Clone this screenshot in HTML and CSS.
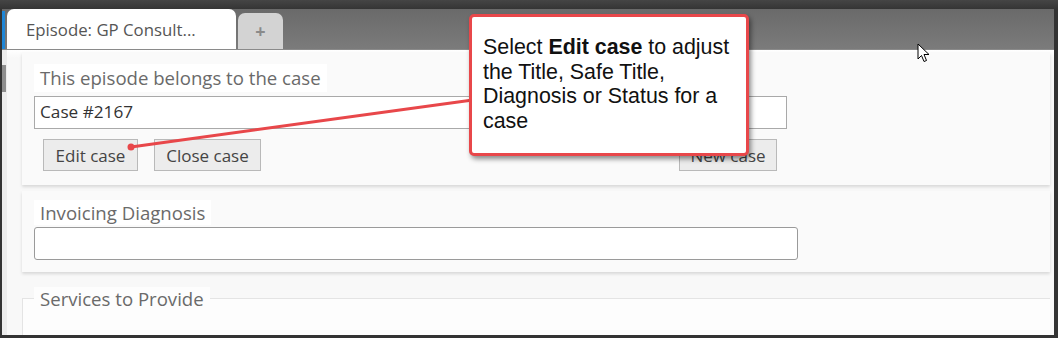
FILE: index.html
```html
<!DOCTYPE html>
<html>
<head>
<meta charset="utf-8">
<link rel="stylesheet" href="styles.css">
</head>
<body>
<div class="frame">
  <div class="tabbar">
    <div class="active-mark"></div>
    <div class="tab active">Episode: GP Consult...</div>
    <div class="tab add">+</div>
  </div>
  <div class="content">
    <div class="gutter"><div class="thumb"></div></div>
    <div class="main">
      <section class="panel first">
        <div class="legend">This episode belongs to the case</div>
        <div class="input">Case #2167</div>
        <div class="btn-row">
          <button class="btn edit">Edit case</button>
          <button class="btn close">Close case</button>
          <button class="btn new">New case</button>
        </div>
      </section>
      <section class="panel second">
        <div class="legend">Invoicing Diagnosis</div>
        <div class="input rounded"></div>
      </section>
      <section class="fieldset">
        <div class="legend plain">Services to Provide</div>
      </section>
    </div>
  </div>

  <svg class="pointer-line" width="1058" height="338" viewBox="0 0 1058 338">
    <line x1="131" y1="147" x2="480" y2="99" stroke="#e8474a" stroke-width="3" stroke-linecap="round"/>
    <circle cx="131" cy="147" r="3.5" fill="#e8474a"/>
  </svg>

  <div class="callout">Select <b>Edit case</b> to adjust<br>the Title, Safe Title,<br>Diagnosis or Status for a<br>case</div>

  <svg class="cursor" width="14" height="21" viewBox="0 0 14 21">
    <path d="M1 1 L1 16 L4.5 12.5 L7 18.5 L9.5 17.5 L7 11.5 L12 11.5 Z" fill="#fff" stroke="#000" stroke-width="1" stroke-linejoin="round"/>
  </svg>
</div>
</body>
</html>
```
FILE: styles.css
```css
* { box-sizing: border-box; }
html, body { margin: 0; padding: 0; }
body { width: 1058px; height: 338px; overflow: hidden; background: #3a3a3a; }

.frame {
  position: relative;
  width: 1058px;
  height: 338px;
  background: linear-gradient(#454545, #333 10px, #333);
  padding: 9px 4px 3px 2px;
  display: flex;
  flex-direction: column;
  font-family: "Open Sans", "Noto Sans", sans-serif;
}

.tabbar {
  height: 41px;
  background: linear-gradient(#6a6a6a, #7b7b7b);
  display: flex;
  align-items: flex-end;
  border-bottom: 1px solid #8a8a8a;
}
.active-mark {
  width: 3px;
  height: 38px;
  background: #1f86d6;
  margin-right: 2px;
}
.tab {
  border-radius: 7px 7px 0 0;
}
.tab.active {
  width: 229px;
  height: 40px;
  background: #fff;
  color: #555;
  font-size: 16.8px;
  line-height: 40px;
  padding-left: 19px;
  padding-top: 1px;
  white-space: nowrap;
}
.tab.add {
  width: 45px;
  height: 36px;
  margin-left: 2px;
  background: #d3d3d3;
  color: #8a8a8a;
  font-size: 18px;
  font-weight: 700;
  text-align: center;
  line-height: 36px;
}

.content {
  flex: 1;
  display: flex;
  background: #f8f8f8;
}
.gutter {
  width: 5px;
  background: #ececec;
}
.thumb {
  margin-top: 15px;
  width: 4px;
  height: 27px;
  background: #8e8e8e;
}
.main {
  flex: 1;
  padding: 2px 4px 0 15px;
  display: flex;
  flex-direction: column;
  overflow: hidden;
  background: linear-gradient(#fff, #f8f8f8 8px);
}

.panel {
  background: #fafafa;
  box-shadow: 0 2px 3px rgba(0, 0, 0, 0.13);
  padding-left: 12px;
}
.panel.first {
  height: 133px;
  padding-top: 12px;
}
.panel.second {
  margin-top: 6px;
  height: 81px;
  padding-top: 9px;
}

.legend {
  display: inline-block;
  background: #fff;
  color: #6a6a6a;
  font-size: 18.6px;
  line-height: 28px;
  height: 28px;
  padding: 0 6px;
  white-space: nowrap;
}
.panel.second .legend { height: 25px; line-height: 25px; }

.input {
  width: 753px;
  height: 33px;
  margin-top: 4px;
  background: #fff;
  border: 1px solid #a9a9a9;
  color: #333;
  font-size: 17.2px;
  line-height: 30px;
  padding-left: 5px;
}
.input.rounded {
  width: 764px;
  margin-top: 2px;
  border-radius: 3px;
  border-color: #9a9a9a;
}

.btn-row {
  width: 753px;
  margin-top: 10px;
  padding: 0 10px 0 9px;
  display: flex;
  gap: 16px;
}
.btn {
  height: 32px;
  background: #ececec;
  border: 1px solid #b9b9b9;
  color: #444;
  font-family: "Open Sans", "Noto Sans", sans-serif;
  font-size: 17px;
  padding: 0;
}
.btn.edit { width: 95px; }
.btn.close { width: 107px; }
.btn.new { width: 98px; margin-left: auto; }

.fieldset {
  margin-top: 26px;
  flex: 1;
  border-top: 1px solid #e4e4e4;
  border-left: 1px solid #e4e4e4;
  padding-left: 11px;
  background: #fdfdfd;
}
.legend.plain {
  display: block;
  width: max-content;
  margin-top: -12px;
  background: #fdfdfd;
  height: 24px;
  line-height: 24px;
}

.pointer-line {
  position: absolute;
  left: 0;
  top: 0;
  pointer-events: none;
}

.callout {
  position: absolute;
  left: 469px;
  top: 14px;
  width: 280px;
  height: 142px;
  background: #fff;
  border: 3px solid #e8474a;
  border-radius: 5px;
  box-shadow: 2px 3px 5px rgba(0, 0, 0, 0.45);
  font-family: "Liberation Sans", Arial, sans-serif;
  font-size: 21.4px;
  line-height: 24.7px;
  color: #111;
  padding: 18px 0 0 11px;
  white-space: nowrap;
}
.callout b { font-weight: 700; }

.cursor {
  position: absolute;
  left: 917px;
  top: 43px;
}
```
